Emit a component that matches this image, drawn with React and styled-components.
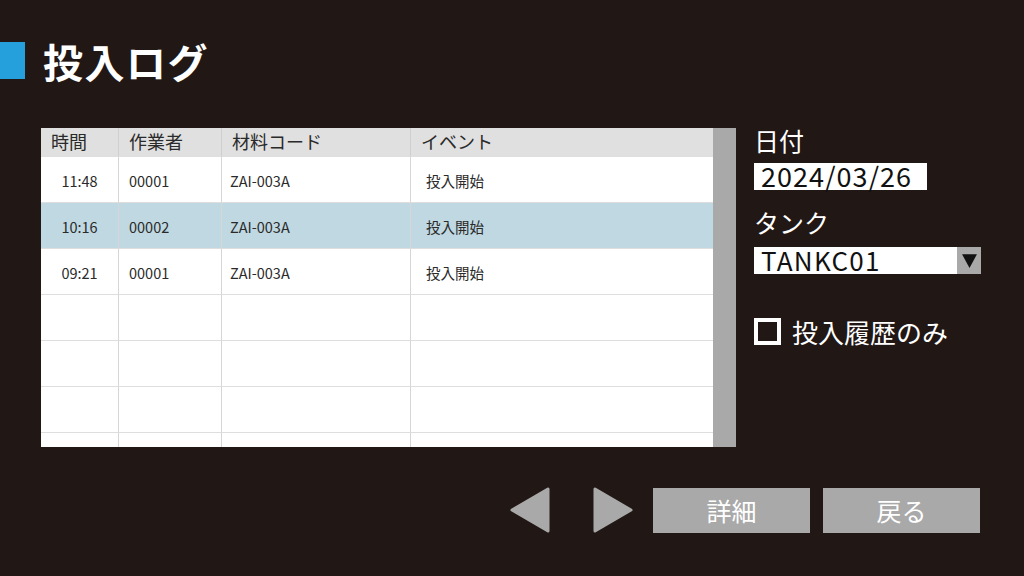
import React from "react";
import styled, { createGlobalStyle } from "styled-components";

const Global = createGlobalStyle`
  html, body { margin: 0; padding: 0; background: #211816; }
  body { font-family: "Noto Sans CJK JP", "Noto Sans", sans-serif; }
`;

const Page = styled.div`
  width: 1024px;
  height: 576px;
  background: #211816;
  display: flex;
  flex-direction: column;
  padding-top: 42px;
  box-sizing: border-box;
  overflow: hidden;
`;

const Header = styled.header`
  display: flex;
  align-items: center;
  gap: 18px;
  height: 37px;
`;

const Marker = styled.div`
  width: 25px;
  height: 37px;
  background: #25a0dc;
`;

const Title = styled.h1`
  margin: 0;
  color: #fff;
  font-size: 40px;
  font-weight: 700;
  line-height: 1;
  letter-spacing: 1.5px;
`;

const Main = styled.main`
  display: flex;
  margin-top: 49px;
  margin-left: 41px;
  gap: 18px;
`;

const TableWrap = styled.div`
  display: flex;
  width: 695px;
  height: 319px;
  background: #fff;
  overflow: hidden;
`;

const Grid = styled.div`
  flex: 1;
  display: grid;
  grid-template-columns: 77px 103px 189px 1fr;
  grid-auto-rows: 46px;
  grid-template-rows: 28px;
  align-content: start;
`;

const HeadCell = styled.div`
  background: #e0e0e0;
  color: #2a2a2a;
  font-size: 18px;
  display: flex;
  align-items: center;
  padding-left: 10px;
  padding-bottom: 3px;
  box-sizing: border-box;
  border-left: ${(p) => (p.$first ? "none" : "1px solid #cfcfcf")};
`;

const Cell = styled.div`
  background: ${(p) => (p.$selected ? "#bfd8e1" : "#fff")};
  color: #2a2a2a;
  font-size: 14.5px;
  display: flex;
  align-items: center;
  justify-content: ${(p) => (p.$center ? "center" : "flex-start")};
  padding-left: ${(p) => p.$pad || 0}px;
  padding-top: 2px;
  border-left: ${(p) => (p.$first ? "none" : "1px solid #d6d6d6")};
  border-top: 1px solid #dedede;
  box-sizing: border-box;
`;

const ScrollBar = styled.div`
  width: 23px;
  background: #a9a9a9;
`;

const Side = styled.aside`
  display: flex;
  flex-direction: column;
  width: 227px;
  color: #fff;
`;

const Label = styled.div`
  font-size: 25px;
  line-height: 1;
  margin-top: ${(p) => p.$mt || 0}px;
  height: 25px;
`;

const DateBox = styled.div`
  margin-top: 10px;
  width: 173px;
  height: 27px;
  background: #fff;
  color: #111;
  font-size: 27px;
  line-height: 25px;
  padding-left: 7px;
  box-sizing: border-box;
  letter-spacing: 1px;
`;

const Select = styled.div`
  margin-top: 12px;
  display: flex;
  width: 227px;
  height: 27px;
  background: #fff;
`;

const SelectValue = styled.div`
  flex: 1;
  color: #111;
  font-size: 26px;
  line-height: 25px;
  padding-left: 7px;
  letter-spacing: 1.3px;
`;

const SelectArrow = styled.div`
  width: 24px;
  background: #a9a9a9;
  display: flex;
  align-items: center;
  justify-content: center;
`;

const CheckRow = styled.label`
  display: flex;
  align-items: center;
  gap: 11px;
  margin-top: 44px;
`;

const CheckBox = styled.span`
  width: 27px;
  height: 27px;
  border: 4px solid #fff;
  box-sizing: border-box;
`;

const CheckText = styled.span`
  font-size: 26px;
  line-height: 1;
  color: #fff;
`;

const Footer = styled.footer`
  display: flex;
  justify-content: flex-end;
  align-items: center;
  margin-top: 40px;
  padding-right: 44px;
`;

const Arrow = styled.button`
  width: 40px;
  height: 46px;
  padding: 0;
  border: none;
  background: none;
  margin-right: ${(p) => p.$mr}px;
  display: block;
`;

const Button = styled.button`
  width: 157px;
  height: 45px;
  background: #a9a9a9;
  border: none;
  color: #fff;
  font-family: "Noto Sans CJK JP", sans-serif;
  font-size: 25px;
  margin-left: ${(p) => p.$ml || 0}px;
  padding: 0;
`;

const rows = [
  ["11:48", "00001", "ZAI-003A", "投入開始"],
  ["10:16", "00002", "ZAI-003A", "投入開始"],
  ["09:21", "00001", "ZAI-003A", "投入開始"],
  ["", "", "", ""],
  ["", "", "", ""],
  ["", "", "", ""],
  ["", "", "", ""],
];

export default function App() {
  return (
    <>
      <Global />
      <Page>
        <Header>
          <Marker />
          <Title>投入ログ</Title>
        </Header>
        <Main>
          <TableWrap>
            <Grid>
              <HeadCell $first>時間</HeadCell>
              <HeadCell>作業者</HeadCell>
              <HeadCell>材料コード</HeadCell>
              <HeadCell>イベント</HeadCell>
              {rows.map((r, i) => (
                <React.Fragment key={i}>
                  <Cell $first $center $selected={i === 1}>{r[0]}</Cell>
                  <Cell $pad={10} $selected={i === 1}>{r[1]}</Cell>
                  <Cell $pad={8} $selected={i === 1}>{r[2]}</Cell>
                  <Cell $pad={15} $selected={i === 1}>{r[3]}</Cell>
                </React.Fragment>
              ))}
            </Grid>
            <ScrollBar />
          </TableWrap>
          <Side>
            <Label>日付</Label>
            <DateBox>2024/03/26</DateBox>
            <Label $mt={20}>タンク</Label>
            <Select>
              <SelectValue>TANKC01</SelectValue>
              <SelectArrow>
                <svg width="17" height="17" viewBox="0 0 16 16">
                  <polygon points="1,2 15,2 8,15" fill="#111" />
                </svg>
              </SelectArrow>
            </Select>
            <CheckRow>
              <CheckBox />
              <CheckText>投入履歴のみ</CheckText>
            </CheckRow>
          </Side>
        </Main>
        <Footer>
          <Arrow $mr={43} aria-label="前へ">
            <svg width="40" height="46" viewBox="0 0 40 46">
              <polygon points="38,2 38,44 2,23" fill="#a9a9a9" stroke="#a9a9a9" strokeWidth="3" strokeLinejoin="round" />
            </svg>
          </Arrow>
          <Arrow $mr={20} aria-label="次へ">
            <svg width="40" height="46" viewBox="0 0 40 46">
              <polygon points="2,2 2,44 38,23" fill="#a9a9a9" stroke="#a9a9a9" strokeWidth="3" strokeLinejoin="round" />
            </svg>
          </Arrow>
          <Button>詳細</Button>
          <Button $ml={13}>戻る</Button>
        </Footer>
      </Page>
    </>
  );
}
